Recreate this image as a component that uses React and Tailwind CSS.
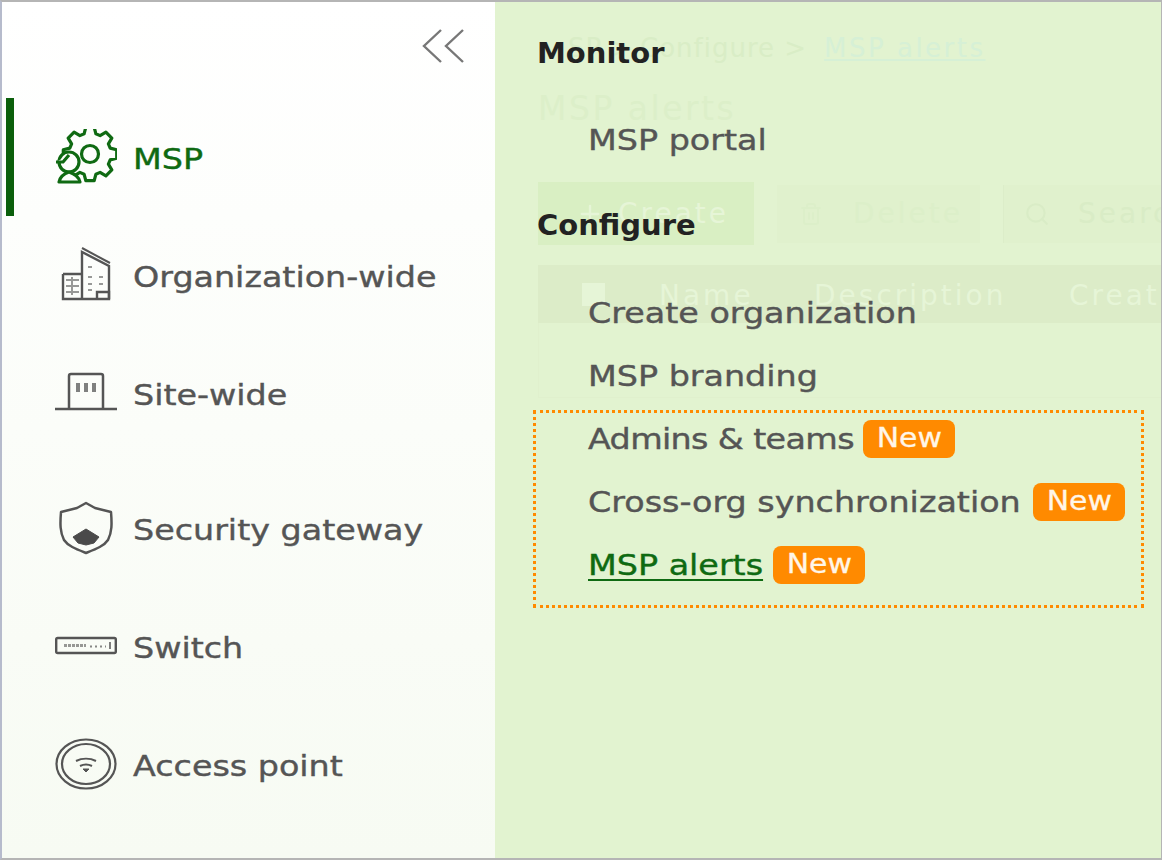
import { Plus, Search, Trash2 } from 'lucide-react'

const gearPath = (cx, cy, outer, inner, teeth) => {
  const pts = []
  const step = (Math.PI * 2) / teeth
  for (let i = 0; i < teeth; i++) {
    const a = i * step - Math.PI / 2
    const p = (r, o) => `${(cx + r * Math.cos(a + o)).toFixed(1)} ${(cy + r * Math.sin(a + o)).toFixed(1)}`
    pts.push(p(inner, -step * 0.36), p(outer, -step * 0.2), p(outer, step * 0.2), p(inner, step * 0.36))
  }
  return `M${pts.join('L')}Z`
}

const MspIcon = () => (
  <svg width="62" height="56" viewBox="0 0 62 56" fill="none" stroke="currentColor" strokeWidth="3.2" strokeLinejoin="round">
    <path d={gearPath(35, 25, 27, 21, 8)} fill="#fdfefc" />
    <circle cx="35" cy="25" r="8.5" />
    <circle cx="14" cy="33" r="10" fill="#fdfefc" />
    <path d="M1 33h7l6-7M14 43c-6 2-9 5-10 10h21c-1-5-5-8-11-10z" fill="#fdfefc" />
  </svg>
)

const OrgIcon = () => (
  <svg width="62" height="56" viewBox="0 0 62 56" fill="none" stroke="#555" strokeWidth="2.4">
    <path d="M8 27h19M8 27v25h46V19L27 5v47" />
    <path d="M27 1l28 15" strokeWidth="2" />
    <path d="M11 33h13M11 39h13M11 45h13M17 30v18M33 20h4M33 30h4M44 30h4M33 37h4M44 37h4M33 43h4" strokeWidth="2" opacity="0.6" />
    <path d="M42 52v-7h12v7" />
  </svg>
)

const SiteIcon = () => (
  <svg width="62" height="56" viewBox="0 0 62 56" fill="none" stroke="#555" strokeWidth="2.5">
    <path d="M0 44h62" />
    <path d="M14 44V11a2 2 0 0 1 2-2h30a2 2 0 0 1 2 2v33" />
    <path d="M23 18v9M31 18v9M39 18v9" strokeWidth="4" opacity="0.75" />
  </svg>
)

const ShieldIcon = () => (
  <svg width="62" height="56" viewBox="0 0 62 56" fill="none" stroke="#555" strokeWidth="2.5" strokeLinejoin="round">
    <path d="M31 3l-9 5-16 4c-1 12-1 20 3 28 4 6 12 9 22 13 10-4 18-7 22-13 4-8 4-16 3-28l-16-4z" />
    <path d="M31 29l13 8-5 6-8 2-8-2-5-6z" fill="#4a4a4a" stroke="#4a4a4a" strokeWidth="1" />
  </svg>
)

const SwitchIcon = () => (
  <svg width="62" height="56" viewBox="0 0 62 56" fill="none" stroke="#555">
    <rect x="1.2" y="20" width="59.6" height="15" rx="1.5" strokeWidth="2.4" />
    <path d="M9 27.5h22" strokeWidth="3" strokeDasharray="3 1" opacity="0.6" />
    <path d="M35 28.5h16" strokeWidth="2" strokeDasharray="2 3" opacity="0.7" />
    <path d="M55 24v7" strokeWidth="1.5" />
  </svg>
)

const ApIcon = () => (
  <svg width="62" height="56" viewBox="0 0 62 56" fill="none" stroke="#555" strokeWidth="2">
    <ellipse cx="31" cy="28" rx="29.5" ry="24.5" strokeWidth="2.2" />
    <ellipse cx="31" cy="28" rx="24" ry="20" strokeWidth="2.2" />
    <path d="M21 25c6-3 14-3 20 0M25 30c4-2 8-2 12 0" strokeWidth="2" />
    <path d="M28 33h6l-3 3z" fill="#555" strokeWidth="1" />
  </svg>
)

const sideItems = [
  { label: 'MSP', icon: <MspIcon />, active: true },
  { label: 'Organization-wide', icon: <OrgIcon /> },
  { label: 'Site-wide', icon: <SiteIcon /> },
  { label: 'Security gateway', icon: <ShieldIcon />, spaced: true },
  { label: 'Switch', icon: <SwitchIcon /> },
  { label: 'Access point', icon: <ApIcon /> },
]

// the reference is a horizontally stretched capture, so labels get the same stretch
const stretched = 'inline-block origin-left scale-x-[1.15] [-webkit-text-stroke:0.4px]'

function Sidebar() {
  return (
    <aside className="w-[493px] shrink-0 pl-1 bg-gradient-to-b from-[#ffffff] via-[#fbfdf9] to-[#f7fbf3]">
      <div className="h-[96px] pt-[26px] pr-[30px] flex justify-end items-start">
        <svg width="44" height="36" viewBox="0 0 44 36" fill="none" stroke="#777" strokeWidth="2.4">
          <path d="M20 2L3 18l17 16M42 2L25 18l17 16" />
        </svg>
      </div>
      {sideItems.map(item => (
        <div
          key={item.label}
          className={`h-[118px] flex items-center border-l-[8px] pl-[41px] gap-[16px] ${item.spaced ? 'mt-[17px]' : ''} ${item.active ? 'border-[#0b5f0b] text-[#0f6a12]' : 'border-transparent text-[#555555]'}`}
        >
          {item.icon}
          <span className={`text-[29px] pt-[6px] whitespace-nowrap ${stretched}`}>{item.label}</span>
        </div>
      ))}
    </aside>
  )
}

// page behind the overlay, barely visible through it
function GhostPage() {
  return (
    <div className="absolute inset-0 overflow-hidden pl-[43px] pt-[26px] select-none text-[28px] tracking-[3px] whitespace-nowrap">
      <div className="pl-[30px] h-[40px] flex items-center text-[26px] tracking-[1px] text-[#d9edc6]">
        <span className="w-[72px]">SP &gt;</span>
        <span>Configure &gt;</span>
        <span className="ml-[17px] tracking-[2.5px] text-[#d6f0d6] underline">MSP alerts</span>
      </div>
      <div className="mt-[21px] h-[40px] flex items-center text-[33px] tracking-[2.5px] text-[#dcefc9]">MSP alerts</div>
      <div className="mt-[53px] flex items-center gap-[23px]">
        <div className="w-[216px] h-[63px] shrink-0 bg-[#d9efc3] flex items-center pl-[38px] gap-[14px] text-[#e6f5d7]">
          <Plus size={28} />
          Create
        </div>
        <div className="w-[203px] h-[58px] shrink-0 bg-[#e0f1cd] flex items-center pl-[22px] gap-[30px] text-[#dcefc9]">
          <Trash2 size={24} />
          Delete
        </div>
        <div className="w-[200px] h-[58px] shrink-0 bg-[#e0f1cd] border-l border-[#dcedc9] flex items-center pl-[20px] gap-[28px] text-[#d9ecc6]">
          <Search size={26} />
          Search
        </div>
      </div>
      <div className="mt-[20px] h-[58px] bg-[#dcecc8] flex items-center pl-[44px] text-[#e6f5d7]">
        <span className="w-[23px] h-[23px] shrink-0 bg-[#e6f5d7]"></span>
        <span className="ml-[54px] w-[155px] shrink-0 pt-[3px]">Name</span>
        <span className="w-[255px] shrink-0 pt-[3px]">Description</span>
        <span className="pt-[3px]">Created</span>
      </div>
      <div className="h-[75px] border-l border-b border-[#e0f0cd]"></div>
    </div>
  )
}

function NewBadge() {
  return (
    <span className="ml-[10px] w-[92px] h-[38px] bg-[#ff8a00] rounded-lg flex items-center justify-center text-[#fff6e8]">
      <span className="text-[26px] scale-x-[1.15] [-webkit-text-stroke:0.3px]">New</span>
    </span>
  )
}

function MenuRow({ children }) {
  return (
    <div className="h-[63px] flex items-center pl-[93px] whitespace-nowrap text-[#555555]">
      <span className={stretched}>{children}</span>
    </div>
  )
}

function BoxRow({ children, width, current }) {
  return (
    <div className="h-[63px] flex items-center pl-[55px] whitespace-nowrap">
      <div className={`${width} pt-[2px]`}>
        <span className={`${stretched} ${current ? 'text-[#0f6a12] underline underline-offset-4 decoration-2' : 'text-[#555555]'}`}>{children}</span>
      </div>
      <NewBadge />
    </div>
  )
}

function FlyoutMenu() {
  return (
    <div className="relative pt-[26px] text-[29px]">
      <h3 className="pl-[42px] pt-[2px] h-[50px] flex items-center font-bold text-[#222222]">Monitor</h3>
      <div className="pl-[93px] pt-[2px] mt-[37px] h-[50px] flex items-center text-[#555555]"><span className={stretched}>MSP portal</span></div>
      <h3 className="pl-[42px] mt-[36px] h-[50px] flex items-center font-bold text-[#222222]">Configure</h3>
      <div className="mt-[31px]">
        <MenuRow>Create organization</MenuRow>
        <MenuRow>MSP branding</MenuRow>
      </div>
      <div className="ml-[38px] w-[611px] h-[198px] mt-[2px] border-[3px] border-dotted border-[#ff8a00]">
        <div className="-mt-[6px] -ml-[3px]">
          <BoxRow width="w-[265px] tracking-[-0.55px]">Admins &amp; teams</BoxRow>
          <BoxRow width="w-[435px]">Cross-org synchronization</BoxRow>
          <BoxRow width="w-[175px]" current>MSP alerts</BoxRow>
        </div>
      </div>
    </div>
  )
}

export default function App() {
  return (
    <div className="w-[1162px] h-[860px] flex overflow-hidden border-t-2 border-b-2 border-t-[#b5b5b5] border-b-[#b5b5b5] border-l-2 border-l-[#b6bbcc] border-r border-r-[#b5b5b5] font-['DejaVu_Sans','Liberation_Sans',sans-serif]">
      <Sidebar />
      <main className="relative flex-1 bg-[#e2f3d0]">
        <GhostPage />
        <FlyoutMenu />
      </main>
    </div>
  )
}
